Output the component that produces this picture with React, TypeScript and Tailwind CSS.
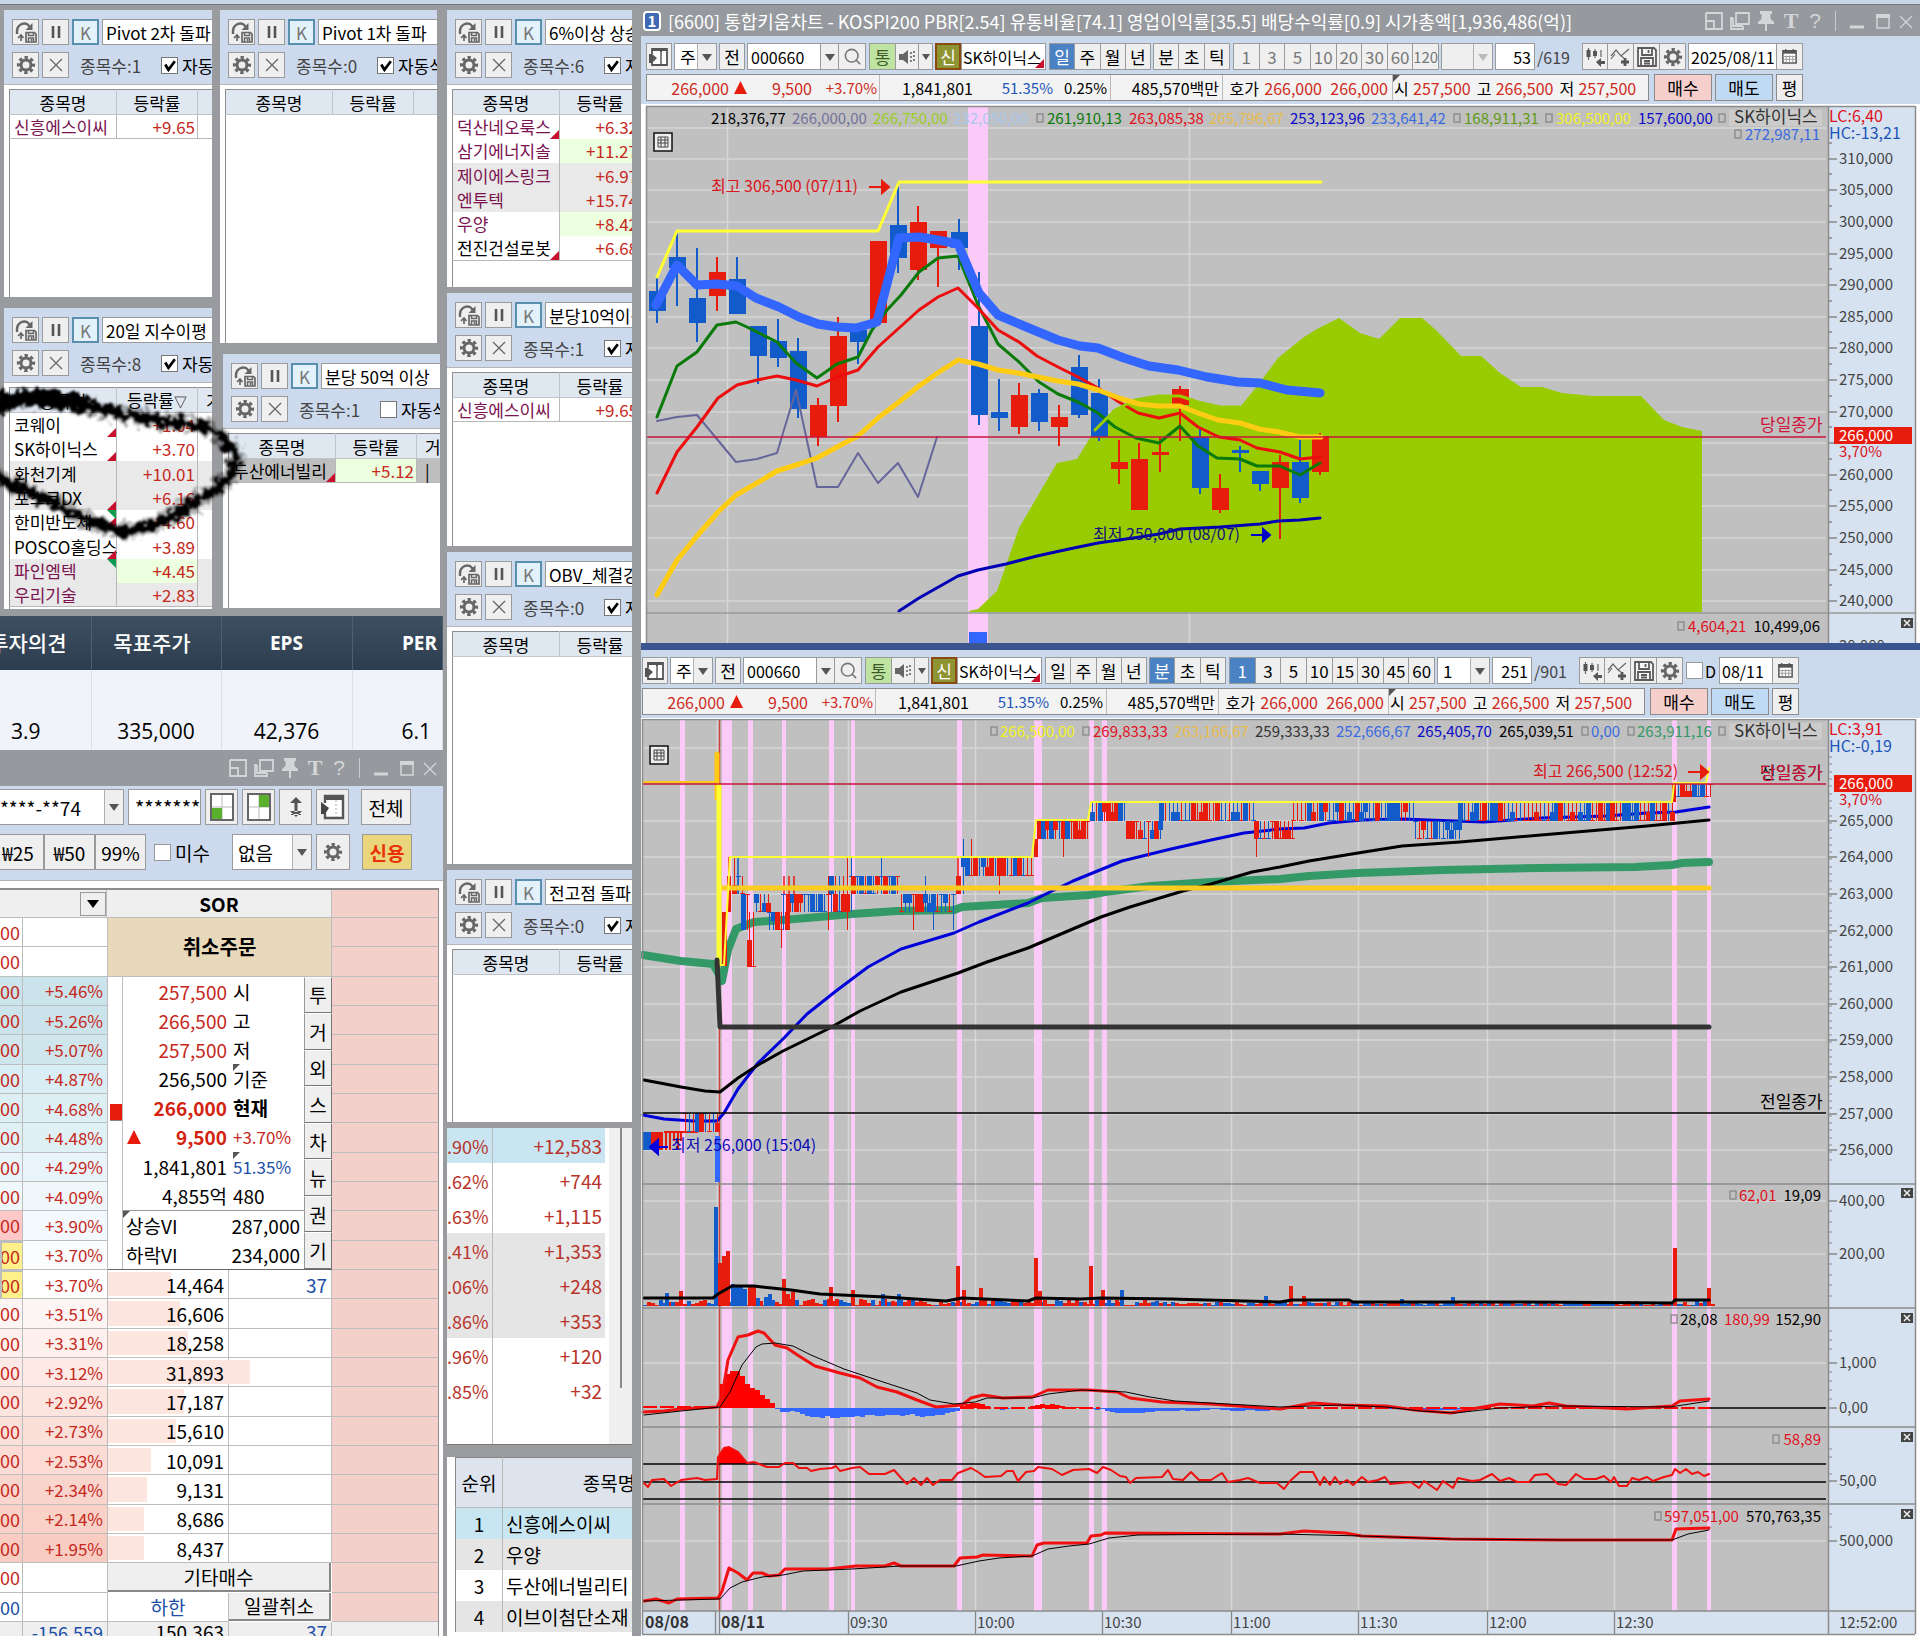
import React from "react";
import { Search } from "lucide-react";

type Pt = [number, number];

const RED = "#e81c0c";
const BLUE = "#115bcb";
const BTN = "border border-[#9a9a9a] bg-[#efefef] flex items-center justify-center overflow-hidden";

/* ---------- icons ---------- */

const Gear = () => (
  <svg viewBox="0 0 20 20" className="size-5 shrink-0" aria-hidden="true">
    <circle cx="10" cy="10" r="7.4" fill="none" stroke="#666" strokeWidth="3.400" strokeDasharray="3.200 2.61" strokeDashoffset="1.6" />
    <circle cx="10" cy="10" r="5" fill="none" stroke="#666" strokeWidth="3" />
  </svg>
);

const Cross = () => (
  <svg viewBox="0 0 16 16" className="size-4 shrink-0" aria-hidden="true">
    <path d="M2 2L14 14M14 2L2 14" stroke="#666" strokeWidth="1.3" />
  </svg>
);

const ReloadSave = () => (
  <svg viewBox="0 0 24 24" className="size-6 shrink-0" aria-hidden="true">
    <path d="M3 14V11C3 6 8 2 13 4L17 8" fill="none" stroke="#666" strokeWidth="2.400" />
    <path d="M18.500 3V10H11.500Z" fill="#666" />
    <path d="M7 15.500V21M4 18L7 15L9.500 18" stroke="#666" strokeWidth="1.700" fill="none" />
    <path d="M12 12.500H20.500L22 14V22H12Z" fill="#efefef" stroke="#666" strokeWidth="1.700" />
    <path d="M14.500 12V15.500H19.500V12M14.500 22V18H19.500V22M17.500 19V21" fill="none" stroke="#666" strokeWidth="1.500" />
  </svg>
);

const Pause = () => (
  <svg viewBox="0 0 16 16" className="size-4 shrink-0" aria-hidden="true">
    <path d="M5 2V14M11 2V14" stroke="#555" strokeWidth="2.600" />
  </svg>
);

const PanelIcon = () => (
  <svg viewBox="0 0 22 22" className="size-[22px] shrink-0" aria-hidden="true">
    <path d="M4 8V3H19V19H4V16" fill="#fff" stroke="#555" strokeWidth="1.8" />
    <path d="M4 4H19M13 4V19" stroke="#555" strokeWidth="2" fill="none" />
    <path d="M13 6V18" stroke="#fff" strokeWidth="0.600" />
    <path d="M1 8H4L9 12L4 17H1Z" fill="#555" />
  </svg>
);

const Speaker = () => (
  <svg viewBox="0 0 20 20" className="size-5 shrink-0" aria-hidden="true">
    <path d="M2 7H6L11 3V17L6 13H2Z" fill="#666" />
    <path d="M14 5V15M17 4V16" stroke="#666" strokeWidth="1.6" strokeDasharray="2 2" />
  </svg>
);

const CandleArrow = () => (
  <svg viewBox="0 0 22 22" className="size-[22px] shrink-0" aria-hidden="true">
    <path d="M4.500 2V14M11 3V12M17 4V11" stroke="#666" strokeWidth="1.200" />
    <path d="M2.500 4H6.500V11H2.500ZM9 5H13V10H9Z" fill="#555" />
    <path d="M12 16L17 12V15H21V18H17V21Z" fill="#555" />
  </svg>
);

const ZigPlus = () => (
  <svg viewBox="0 0 22 22" className="size-[22px] shrink-0" aria-hidden="true">
    <path d="M1 10L6 4L11 10L19 3M1 13L5 8M11 10L14 12" fill="none" stroke="#666" strokeWidth="1.200" />
    <path d="M15 12V20M11 16H19" stroke="#555" strokeWidth="2.800" />
  </svg>
);

const Floppy = () => (
  <svg viewBox="0 0 22 22" className="size-[22px] shrink-0" aria-hidden="true" fill="none" stroke="#5c5c5c" strokeWidth="1.800">
    <path d="M2 2H18L20 4V20H2Z" fill="#f4f4f4" />
    <path d="M6 2V9H16V2M12.500 4V7" />
    <path d="M5 20V12H17V20M8 15H14M8 17.500H14" />
  </svg>
);

const CalendarIcon = () => (
  <svg viewBox="0 0 18 18" className="size-[17px] shrink-0" aria-hidden="true" fill="none" stroke="#555">
    <path d="M2 3H16V16H2Z" fill="#fff" strokeWidth="1.600" />
    <path d="M2 4.500H16" strokeWidth="3" />
    <path d="M5 1V5M13 1V5" strokeWidth="1.500" />
    <path d="M5.500 8V15M9 8V15M12.500 8V15M3 9H15M3 12H15" stroke="#999" />
  </svg>
);

const Caret = ({ light = false }: { light?: boolean }) => (
  <svg viewBox="0 0 10 8" className="h-2 w-[10px] shrink-0" aria-hidden="true">
    <path d="M0 1H10L5 8Z" fill={light ? "#bbb" : "#555"} />
  </svg>
);

function TitleButtons() {
  const b = "flex h-5 w-[26px] items-center justify-center";
  return (
    <div className="flex shrink-0 items-center text-[#d3d5d7]">
      <button className={b} aria-label="크기">
        <svg viewBox="0 0 18 18" className="size-[18px]" fill="none" stroke="currentColor" strokeWidth="1.800">
          <path d="M1 1H17V17H9M1 1V8M1 9H9V17H1Z" />
        </svg>
      </button>
      <button className={b} aria-label="복사">
        <svg viewBox="0 0 20 18" className="h-[18px] w-5" fill="none" stroke="currentColor" strokeWidth="1.800">
          <path d="M6 1H19V12H6ZM3 6H1V17H13V14M3 6V14H13" />
        </svg>
      </button>
      <button className={b} aria-label="고정">
        <svg viewBox="0 0 16 20" className="h-5 w-4" fill="currentColor">
          <path d="M2 0H14V3H12.500V8L16 11V13H0V11L3.500 8V3H2ZM7 13H9V20H7Z" />
        </svg>
      </button>
      <button className="w-6 font-['Liberation_Serif',serif] text-[22px] leading-5 font-bold" aria-label="글꼴">T</button>
      <button className="w-6 font-['Liberation_Sans',sans-serif] text-[21px] leading-5" aria-label="도움말">?</button>
      <span className="mx-2 h-5 w-px bg-[#c8cacc]" />
      <button className={b} aria-label="최소화">
        <svg viewBox="0 0 14 18" className="h-[18px] w-[14px]"><path d="M0 15H14" stroke="currentColor" strokeWidth="3" /></svg>
      </button>
      <button className={b} aria-label="최대화">
        <svg viewBox="0 0 14 18" className="h-[18px] w-[14px]" fill="none" stroke="currentColor"><path d="M1 5V16H13V5" strokeWidth="1.500" /><path d="M0 4H14" strokeWidth="4" /></svg>
      </button>
      <button className="flex h-5 w-5 items-center justify-center" aria-label="닫기">
        <svg viewBox="0 0 14 18" className="h-[18px] w-[14px]"><path d="M1 4L13 16M13 4L1 16" stroke="currentColor" strokeWidth="1.300" /></svg>
      </button>
    </div>
  );
}

/* ---------- condition search windows ---------- */

type Row = { name: string; rate: string; extra?: string; dark?: boolean; nameBg?: string; rateBg?: string; mark?: "r" | "g" | "rg" };

type CondProps = { title: string; count: number; rows?: Row[]; checked?: boolean; sorted?: boolean; third?: string; className: string };

function ConditionWindow({ title, count, rows = [], checked = true, sorted = false, third = "", className }: CondProps) {
  const b = BTN + " h-[26px] w-[27px] shrink-0";
  return (
    <section className={"relative shrink-0 overflow-hidden bg-white " + className}>
      <div className="flex h-[75px] w-[320px] flex-col gap-[7px] border-b border-[#b5b5b5] bg-[#cddaed] pt-[9px] pl-2">
        <div className="flex gap-[3px]">
          <button className={b} aria-label="다시 조회"><ReloadSave /></button>
          <button className={b} aria-label="일시정지"><Pause /></button>
          <button className="flex h-[26px] w-[27px] shrink-0 items-center justify-center border-2 border-[#5b8fae] bg-[#e3f1fa] leading-none text-[#777]">K</button>
          <input aria-label="조건식" defaultValue={title} className="h-[26px] w-[200px] border border-[#9a9a9a] bg-white pl-[3px] leading-none text-black" />
        </div>
        <div className="flex items-center gap-[3px]">
          <button className={b} aria-label="설정"><Gear /></button>
          <button className={b} aria-label="삭제"><Cross /></button>
          <span className="ml-2 w-[78px] leading-none text-[#444]">종목수:{count}</span>
          <label className="flex items-center gap-1 leading-none whitespace-nowrap">
            <span className="relative flex">
              <input type="checkbox" defaultChecked={checked} className="peer size-[17px] appearance-none border border-[#777] bg-white" />
              <svg viewBox="0 0 16 16" className="pointer-events-none absolute inset-0 hidden size-[17px] peer-checked:block"><path d="M4 7L7 12L13 4" fill="none" stroke="#000" strokeWidth="2.600" /></svg>
            </span>
            자동삭제
          </label>
        </div>
      </div>
      <table className="mt-1 ml-[5px] h-full w-[290px] table-fixed border-collapse border-t border-l border-[#8e8e8e] leading-none">
        <colgroup><col className="w-[107px]" /><col className="w-[81px]" /><col /></colgroup>
        <thead>
          <tr className="h-[25px] bg-[#dfe7f1]">
            <th className="border-r border-b border-[#c0c4ca] font-normal">종목명</th>
            <th className="border-r border-b border-[#c0c4ca] font-normal whitespace-nowrap">등락률{sorted && <svg viewBox="0 0 14 14" className="inline size-[13px]"><path d="M1 1H13L7 13Z" fill="none" stroke="#555" /></svg>}</th>
            <th className="border-b border-[#c0c4ca] pl-2 text-left font-normal">{third}</th>
          </tr>
        </thead>
        <tbody>
          {rows.map((r, i) => (
            <tr key={i} className={"h-6 nth-[3n]:h-[25px] " + (i === rows.length - 1 ? "border-b border-[#b8b8b8]" : "")}>
              <td className={"relative border-r border-[#b8b8b8] pl-1 whitespace-nowrap " + (r.dark ? "text-black " : "text-[#7a1350] ") + (r.nameBg ?? "")}>
                {r.name}
                {r.mark && (
                  <svg viewBox="0 0 9 16" className={"absolute right-0 h-4 w-[9px] " + (r.mark === "r" ? "bottom-0" : "top-0")}>
                    {r.mark !== "g" && <path d="M9 7V16H0Z" fill="#c8102e" />}
                    {r.mark !== "r" && <path d="M0 0H9V9Z" fill="#109c50" />}
                  </svg>
                )}
              </td>
              <td className={"border-r border-[#b8b8b8] pr-[2px] text-right text-[#c5281c] " + (r.rateBg ?? "")}>{r.rate}</td>
              <td className={(r.nameBg ?? "") + " pl-2"}>{r.extra}</td>
            </tr>
          ))}
          <tr><td colSpan={3} /></tr>
        </tbody>
      </table>
    </section>
  );
}

const G = "bg-[#e9e9e9]";
const L = "bg-[#ecffdf]";

const rowsIndex: Row[] = [
  { name: "코웨이", rate: "+1.04", dark: true, mark: "r" },
  { name: "SK하이닉스", rate: "+3.70", dark: true, mark: "r" },
  { name: "화천기계", rate: "+10.01", dark: true, nameBg: G, rateBg: G },
  { name: "포스코DX", rate: "+6.16", dark: true, nameBg: G, rateBg: G, mark: "r" },
  { name: "한미반도체", rate: "+4.60", dark: true, mark: "rg" },
  { name: "POSCO홀딩스", rate: "+3.89", dark: true, mark: "r" },
  { name: "파인엠텍", rate: "+4.45", nameBg: G, rateBg: L, mark: "g" },
  { name: "우리기술", rate: "+2.83", nameBg: G, rateBg: G },
];

const rowsSix: Row[] = [
  { name: "덕산네오룩스", rate: "+6.32", mark: "r" },
  { name: "삼기에너지솔", rate: "+11.27", rateBg: L },
  { name: "제이에스링크", rate: "+6.97", nameBg: G, rateBg: G },
  { name: "엔투텍", rate: "+15.74", nameBg: G, rateBg: G },
  { name: "우양", rate: "+8.42", rateBg: L },
  { name: "전진건설로봇", rate: "+6.68", dark: true, mark: "r" },
];

/* Hand-drawn marker ring around the highlighted rows */
const MarkerRing = () => (
  <svg viewBox="0 0 260 180" className="pointer-events-none absolute top-[370px] left-0 h-[180px] w-[260px]" aria-hidden="true">
    <defs>
      <filter id="rough" x="-10%" y="-10%" width="120%" height="120%">
        <feTurbulence type="fractalNoise" baseFrequency="0.14" numOctaves="2" seed="4" result="n" />
        <feDisplacementMap in="SourceGraphic" in2="n" scale="18" xChannelSelector="R" yChannelSelector="G" result="d" />
        <feGaussianBlur in="d" stdDeviation="0.9" />
      </filter>
    </defs>
    <g filter="url(#rough)" fill="none" stroke="#000" strokeLinecap="round" strokeLinejoin="round">
      <path d="M-8 34L8 26L41 24L82 31L122 39L163 46L204 51L222 62L235 78L233 97L216 114L184 134L155 150L122 157L90 147L53 127L12 110L-8 98" strokeWidth="17" opacity="0.3" />
      <path d="M-8 34L8 24L41 22L82 28" strokeWidth="17" />
      <path d="M82 30L122 39L163 46L204 51L222 62L235 78L233 97L216 114L184 134L155 150L122 157L90 147L53 127L12 110L-8 98" strokeWidth="9" />
    </g>
  </svg>
);

/* ---------- order window ---------- */

function Combo({ value, label, className, arrow = "w-[19px]", light = false }: { value: string; label: string; className: string; arrow?: string; light?: boolean }) {
  return (
    <div className={"relative shrink-0 border border-[#9a9a9a] " + (light ? "bg-[#efefef] " : "bg-white ") + className}>
      <select aria-label={label} className="absolute inset-0 size-full appearance-none bg-transparent pl-[5px] leading-none outline-none">
        <option>{value}</option>
      </select>
      <span className={"pointer-events-none absolute inset-y-0 right-0 flex items-center justify-center border-l border-[#b0b0b0] bg-[#efefef] " + arrow}><Caret light={light} /></span>
    </div>
  );
}

const asks: [string, string, string][] = [
  ["+5.46%", "bg-[#cbe3ea]", "bg-[#cbe3ea]"], ["+5.26%", "bg-[#cbe3ea]", "bg-[#cbe3ea]"], ["+5.07%", "bg-[#cfe6ed]", "bg-[#cfe6ed]"],
  ["+4.87%", "bg-[#d9edf4]", "bg-[#d9edf4]"], ["+4.68%", "bg-[#dceff5]", "bg-[#dceff5]"], ["+4.48%", "bg-[#e0f1f6]", "bg-[#e0f1f6]"],
  ["+4.29%", "bg-[#e8f4f9]", "bg-[#e8f4f9]"], ["+4.09%", "bg-[#eff7fb]", "bg-[#eff7fb]"], ["+3.90%", "bg-[#f3f9fd]", "bg-[#ffc8c8]"],
  ["+3.70%", "bg-[#fafcfe]", "bg-[#fff08a] border-2 border-[#a03018]"],
];
const bids: [string, string, string, string, number, string][] = [
  ["+3.70%", "bg-white", "bg-[#fff08a] border-2 border-[#a03018]", "14,464", 63, "37"],
  ["+3.51%", "bg-[#fdf5f3]", "bg-[#fdf5f3]", "16,606", 72, ""],
  ["+3.31%", "bg-[#fdf0ed]", "bg-[#fdf0ed]", "18,258", 80, ""],
  ["+3.12%", "bg-[#fdeae6]", "bg-[#fdeae6]", "31,893", 142, ""],
  ["+2.92%", "bg-[#fce4df]", "bg-[#fce4df]", "17,187", 76, ""],
  ["+2.73%", "bg-[#fbe0da]", "bg-[#fbe0da]", "15,610", 68, ""],
  ["+2.53%", "bg-[#fbdbd4]", "bg-[#fbdbd4]", "10,091", 43, ""],
  ["+2.34%", "bg-[#fad5cd]", "bg-[#fad5cd]", "9,131", 39, ""],
  ["+2.14%", "bg-[#fad1c7]", "bg-[#fad1c7]", "8,686", 36, ""],
  ["+1.95%", "bg-[#f9ccc2]", "bg-[#f9ccc2]", "8,437", 36, ""],
];

const CELL = "flex items-center border-r border-b border-[#bdbdbd] overflow-hidden";

const Price = ({ cls = "", blue = false }: { cls?: string; blue?: boolean }) => (
  <div className={CELL + " justify-end pr-[2px] text-[18px] " + (blue ? "text-[#1c4fa8] " : "text-[#c5281c] ") + cls}>00</div>
);

const Corner = () => <svg viewBox="0 0 7 7" className="absolute top-0 left-0 size-[7px]"><path d="M0 0H7L0 7Z" fill="#555" /></svg>;

function InfoRow({ v, l, vc = "", lc = "", corner = false, up = false }: { v: string; l: string; vc?: string; lc?: string; corner?: boolean; up?: boolean }) {
  return (
    <div className="flex min-h-0 flex-1 items-center text-[19px]">
      {up && <svg viewBox="0 0 14 14" className="ml-1 size-[14px]"><path d="M7 0L14 14H0Z" fill={RED} /></svg>}
      <span className={(up ? "w-[86px] " : "w-[104px] ") + "text-right " + vc}>{v}</span>
      <span className={"relative ml-[6px] flex h-full items-center whitespace-nowrap " + lc}>{corner && <Corner />}{l}</span>
    </div>
  );
}

function OrderWindow() {
  const b = BTN + " h-9 leading-none";
  return (
    <section className="flex min-h-0 flex-1 flex-col bg-white text-[19px]">
      <header className="flex h-9 shrink-0 items-center justify-end bg-[#96999e] pr-[3px]"><TitleButtons /></header>
      <div className="flex h-[95px] shrink-0 flex-col gap-[9px] border-b border-[#b0b0b0] bg-[#cddaed] pt-[3px]">
        <div className="flex gap-1">
          <Combo value="****-**74" label="계좌" className="-ml-[6px] h-9 w-[130px]" />
          <input type="text" aria-label="비밀번호" defaultValue="*******" className="h-9 w-[73px] border border-[#9a9a9a] bg-white pl-[6px] text-[20px] leading-none" />
          <button className={b + " w-[33px]"} aria-label="좌하단 배치"><svg viewBox="0 0 24 28" className="h-7 w-6"><rect x="1" y="1" width="22" height="26" fill="#fff" stroke="#666" strokeWidth="2" /><path d="M12 2V26M2 14H22" stroke="#bbb" /><rect x="2" y="15" width="10" height="11" fill="#59b02c" /></svg></button>
          <button className={b + " w-[33px]"} aria-label="우상단 배치"><svg viewBox="0 0 24 28" className="h-7 w-6"><rect x="1" y="1" width="22" height="26" fill="#fff" stroke="#666" strokeWidth="2" /><path d="M12 2V26M2 14H22" stroke="#bbb" /><rect x="12" y="2" width="10" height="12" fill="#59b02c" /></svg></button>
          <button className={b + " w-[33px]"} aria-label="높이"><svg viewBox="0 0 12 20" className="h-5 w-3"><path d="M6 0L12 6H0ZM6 20L12 14H0ZM4.500 5H7.500V15H4.500ZM1 17H11V18H1Z" fill="#555" /></svg></button>
          <button className={b + " w-[33px]"} aria-label="패널"><svg viewBox="0 0 26 28" className="h-7 w-[26px]"><path d="M5 10V3H23V25H5V20" fill="#fff" stroke="#555" strokeWidth="2.400" /><path d="M5 5H23" stroke="#555" strokeWidth="4" /><path d="M16 7V24" stroke="#aaa" strokeDasharray="2 2" /><path d="M1 9L9 15L5 21H1Z" fill="#444" /></svg></button>
          <button className={b + " ml-2 w-[50px]"}>전체</button>
        </div>
        <div className="flex items-center">
          <button className={b + " -ml-2 w-[52px]"}>₩25</button>
          <button className={b + " w-[51px]"}>₩50</button>
          <button className={b + " w-[51px]"}>99%</button>
          <label className="ml-2 flex w-[78px] items-center gap-1 leading-none"><input type="checkbox" className="size-[17px] appearance-none border border-[#999] bg-white" />미수</label>
          <Combo value="없음" label="구분" className="h-9 w-20" />
          <button className={b + " ml-1 w-[34px]"} aria-label="설정"><Gear /></button>
          <button className="ml-3 h-9 w-[50px] border border-[#9a9a9a] bg-[#e9d67c] leading-none font-bold text-[#e8320a]">신용</button>
        </div>
      </div>
      <div className="mr-1 mt-[7px] flex min-h-0 flex-1 flex-col border-t-2 border-r border-[#8c8c8c] leading-none">
        <div className="grid h-7 shrink-0 grid-cols-[107px_225px_1fr]">
          <div className={CELL + " justify-end bg-[#efefef]"}><button className="flex h-6 w-[26px] items-center justify-center border border-[#999] bg-[#efefef]" aria-label="목록"><svg viewBox="0 0 12 8" className="h-2 w-3"><path d="M0 0H12L6 8Z" /></svg></button></div>
          <div className={CELL + " justify-center bg-[#efefef] font-bold"}>SOR</div>
          <div className="border-b border-[#bdbdbd] bg-[#f4d0cb]" />
        </div>
        <div className="grid h-[704px] shrink-0 auto-rows-fr grid-cols-[23px_85px_121px_103px_1fr]">
          <Price /><div className={CELL} />
          <button className="col-span-2 row-span-2 border-r border-b border-[#bdbdbd] bg-[#e8d9bb] text-[20px] font-bold">취소주문</button>
          <div className="border-b border-[#bdbdbd] bg-[#f4d0cb]" />
          <Price /><div className={CELL} /><div className="border-b border-[#bdbdbd] bg-[#f4d0cb]" />
          {asks.map(([p, bg, pbg], i) => (
            <React.Fragment key={i}>
              <Price cls={pbg} />
              <div className={CELL + " justify-end pr-1 text-[17px] text-[#c5281c] " + bg}>{p}</div>
              {i === 0 && (
                <div className="col-span-2 row-[span_10/span_10] flex border-b border-[#666]">
                  <div className="flex w-[15px] items-end border-r border-[#bdbdbd] pb-[148px]"><span className="ml-[2px] h-[17px] w-3 border-b border-[#888] bg-[#e81c0c]" /></div>
                  <div className="flex w-[181px] flex-col">
                    <InfoRow v="257,500" l="시" vc="text-[#c5281c]" />
                    <InfoRow v="266,500" l="고" vc="text-[#c5281c]" />
                    <InfoRow v="257,500" l="저" vc="text-[#c5281c]" />
                    <InfoRow v="256,500" l="기준" corner />
                    <InfoRow v="266,000" l="현재" vc="font-bold text-[#d3220f]" lc="font-bold" />
                    <InfoRow v="9,500" l="+3.70%" vc="font-bold text-[#d3220f]" lc="text-[17px] text-[#c5281c]" up />
                    <InfoRow v="1,841,801" l="51.35%" lc="text-[17px] text-[#1c4fa8]" corner />
                    <InfoRow v="4,855억" l="480" />
                    <div className="relative flex flex-2 flex-col border-t border-[#999]">
                      <Corner />
                      <div className="flex flex-1 items-center justify-between pr-1 pl-[3px]"><span>상승VI</span><span>287,000</span></div>
                      <div className="flex flex-1 items-center justify-between pr-1 pl-[3px]"><span>하락VI</span><span>234,000</span></div>
                    </div>
                  </div>
                  <div className="flex flex-1 flex-col">
                    {["투", "거", "외", "스", "차", "뉴", "권", "기"].map((t) => (
                      <button key={t} className="flex-1 border border-t-white border-r-[#777] border-b-[#777] border-l-[#999] bg-[#efefef] text-[19px]">{t}</button>
                    ))}
                  </div>
                </div>
              )}
              <div className="border-b border-[#bdbdbd] bg-[#f4d0cb]" />
            </React.Fragment>
          ))}
          {bids.map(([p, bg, pbg, qty, w, n], i) => (
            <React.Fragment key={i}>
              <Price cls={pbg} />
              <div className={CELL + " justify-end pr-1 text-[17px] text-[#c5281c] " + bg}>{p}</div>
              <div className="relative flex items-center justify-end border-r border-b border-[#bdbdbd] pr-1">
                <span className="absolute inset-y-[2px] left-0 bg-[#fde6e0]" style={{ width: w }} />
                <span className="relative">{qty}</span>
              </div>
              <div className={CELL + " justify-end pr-1 text-[#1c4fa8]"}>{n}</div>
              <div className="border-b border-[#bdbdbd] bg-[#f4d0cb]" />
            </React.Fragment>
          ))}
          <Price /><div className={CELL} />
          <button className="col-span-2 mr-px mb-px border-r-2 border-b-2 border-[#888] bg-[#efefef]">기타매수</button>
          <div className="border-b border-[#bdbdbd] bg-[#f4d0cb]" />
          <Price blue /><div className={CELL} />
          <div className={CELL + " justify-center text-[#1c4fa8]"}>하한</div>
          <button className="mr-px mb-px border-r-2 border-b-2 border-[#888] bg-[#efefef]">일괄취소</button>
          <div className="border-b border-[#bdbdbd] bg-[#f4d0cb]" />
        </div>
        <div className="grid h-[29px] grid-cols-[23px_85px_121px_103px_1fr] bg-[#efefef]">
          <div className={CELL} />
          <div className={CELL + " justify-end pr-1 text-[18px] text-[#1c4fa8]"}>-156,559</div>
          <div className={CELL + " justify-end pr-1"}>150,363</div>
          <div className={CELL + " justify-end pr-1 text-[#1c4fa8]"}>37</div>
          <div />
        </div>
      </div>
    </section>
  );
}

/* ---------- middle column lists ---------- */

const flows: [string, string, string][] = [
  [".90%", "+12,583", "bg-[#c8e5f1]"], [".62%", "+744", ""], [".63%", "+1,115", ""], [".41%", "+1,353", "bg-[#e5e5e5]"],
  [".06%", "+248", "bg-[#e5e5e5]"], [".86%", "+353", "bg-[#e5e5e5]"], [".96%", "+120", ""], [".85%", "+32", ""],
];

function FlowList() {
  return (
    <section className="flex h-[317px] shrink-0 overflow-hidden border-b border-[#777] bg-white text-[18px] leading-none text-[#b8342a]">
      <table className="h-[317px] w-[158px] shrink-0 table-fixed border-collapse">
        <colgroup><col className="w-[45px]" /><col /></colgroup>
        <tbody>
          {flows.map(([a, b, bg], i) => (
            <tr key={i} className={"h-[35px] " + bg}>
              <td className="border-r border-[#bbb] pr-[3px] text-right"><div className="flex justify-end">{a}</div></td>
              <td className="pr-[3px] text-right text-[19px]">{b}</td>
            </tr>
          ))}
          <tr><td className="border-r border-[#bbb]" /><td /></tr>
        </tbody>
      </table>
      <div className="ml-1 flex flex-1 justify-center bg-[#efefef]"><span className="h-[260px] w-[2px] bg-[#8a8a8a]" /></div>
    </section>
  );
}

function RankList() {
  const rows: [string, string, string][] = [
    ["1", "신흥에스이씨", "bg-[#c8e6f2]"], ["2", "우양", "bg-[#e5e5e5]"], ["3", "두산에너빌리티", "bg-white"], ["4", "이브이첨단소재", "bg-[#e5e5e5]"],
  ];
  return (
    <section className="min-h-0 flex-1 overflow-hidden bg-white pl-2 text-[19px] leading-none">
      <table className="w-[260px] table-fixed border-collapse border-t border-l border-[#888]">
        <colgroup><col className="w-[47px]" /><col /></colgroup>
        <thead><tr className="h-[50px] bg-[#dde4ee]"><th className="border-r border-b border-[#b8b8b8] font-normal whitespace-nowrap">순위</th><th className="border-b border-[#b8b8b8] font-normal">종목명</th></tr></thead>
        <tbody>{rows.map(([n, t, bg]) => <tr key={n} className={"h-[31px] " + bg}><td className="border-r border-[#b8b8b8] text-center">{n}</td><td className="pl-[3px] whitespace-nowrap">{t}</td></tr>)}</tbody>
      </table>
    </section>
  );
}

/* ---------- chart toolbar ---------- */

function Group({ items, active, className, dim = false }: { items: string[]; active?: string; className: string; dim?: boolean }) {
  return (
    <div className={"flex h-[27px] shrink-0 border-t border-l border-[#9a9a9a] " + className}>
      {items.map((t) => (
        <button key={t} className={"flex min-w-0 flex-1 items-center justify-center border-r border-b border-[#9a9a9a] leading-none " + (t.length > 2 ? "text-[15px] " : "") + (t === active ? "bg-[#4a82c4] text-white" : dim ? "bg-[#efefef] text-[#777]" : "bg-[#efefef] text-black")}>{t}</button>
      ))}
    </div>
  );
}

function ChartToolbar({ minute = false }: { minute?: boolean }) {
  const b = BTN + " h-[27px] shrink-0";
  const red = "text-[#cf2a1c]";
  return (
    <div className={"flex h-[69px] shrink-0 flex-col gap-1 overflow-hidden border-b border-white bg-[#cbd9ec] pt-[7px] " + (minute ? "pl-px" : "pl-[5px]")}>
      <div className="flex items-center gap-[2px]">
        <button className={b + " w-[26px]"} aria-label="패널"><PanelIcon /></button>
        <Combo value="주" label="시장" className="h-[27px] w-[43px]" />
        <button className={b + " w-[26px]"}>전</button>
        <div className="mr-px flex">
          <input aria-label="종목코드" defaultValue="000660" className="h-[27px] w-[74px] border border-[#9a9a9a] bg-white pl-[3px] text-[16px] leading-none" />
          <button className={b + " w-[18px] border-l-0"} aria-label="최근 종목"><Caret /></button>
          <button className={b + " w-[27px] border-l-0"} aria-label="검색"><Search size={19} color="#777" strokeWidth={2} /></button>
        </div>
        <div className="flex">
          <button className="h-[27px] w-[27px] border border-[#9a9a9a] bg-[#bfe3a0] leading-none text-[#3c5a2a]">통</button>
          <button className={b + " w-[23px] border-l-0"} aria-label="소리"><Speaker /></button>
          <button className={b + " w-[14px] border-l-0"} aria-label="소리 설정"><svg viewBox="0 0 8 6" className="h-[6px] w-2"><path d="M0 0H8L4 6Z" fill="#555" /></svg></button>
        </div>
        <div className="relative mr-px flex">
          <span className="flex h-[27px] w-[26px] items-center justify-center border-2 border-[#8a4a10] bg-[#8f9432] leading-none text-white">신</span>
          <span className="flex h-[27px] w-[85px] items-center border border-[#9a9a9a] bg-white pl-px text-[16px] leading-none whitespace-nowrap">SK하이닉스</span>
          <svg viewBox="0 0 9 9" className="absolute right-[2px] bottom-[2px] size-[9px]"><path d="M9 0V9H0Z" fill="#c8102e" /></svg>
        </div>
        <Group className="w-[102px]" items={["일", "주", "월", "년"]} active={minute ? undefined : "일"} />
        <Group className="mr-px w-[77px]" items={["분", "초", "틱"]} active={minute ? "분" : undefined} />
        {minute ? (
          <Group className="w-[206px]" items={["1", "3", "5", "10", "15", "30", "45", "60"]} active="1" />
        ) : (
          <Group className="w-[206px]" items={["1", "3", "5", "10", "20", "30", "60", "120"]} dim />
        )}
        {minute ? <Combo value="1" label="간격" className="h-[27px] w-[53px] pl-2" /> : <Combo value="" label="간격" light className="h-[27px] w-[52px]" />}
        <input aria-label="봉 개수" defaultValue={minute ? "251" : "53"} className="h-[27px] w-10 border border-[#9a9a9a] bg-white pr-[3px] text-right text-[16px] leading-none" />
        <span className="w-[43px] text-[16px] leading-none text-[#444]">{minute ? "/901" : "/619"}</span>
        <div className="flex">
          <button className={b + " w-[26px]"} aria-label="봉 이동"><CandleArrow /></button>
          <button className={b + " w-[26px] border-l-0"} aria-label="지표 추가"><ZigPlus /></button>
          <button className={b + " w-[26px] border-l-0"} aria-label="저장"><Floppy /></button>
          <button className={b + " w-[26px] border-l-0"} aria-label="설정"><Gear /></button>
        </div>
        {minute && <label className="mx-px flex items-center gap-[2px] text-[16px] leading-none"><input type="checkbox" className="size-[17px] appearance-none border border-[#999] bg-white" />D</label>}
        <div className="flex">
          <input aria-label="날짜" defaultValue={minute ? "08/11" : "2025/08/11"} className={"h-[27px] border border-[#9a9a9a] bg-white pl-[2px] text-[16px] leading-none " + (minute ? "w-[54px]" : "w-[89px]")} />
          <button className={b + " w-[26px] border-l-0"} aria-label="달력"><CalendarIcon /></button>
        </div>
      </div>
      <div className="flex text-[16px] leading-none whitespace-nowrap">
        <div className="flex h-[27px] w-[1003px] shrink-0 items-center border border-[#8c8c8c] bg-[#f3f3f3]">
          <span className={"w-[82px] text-right " + red}>266,000</span>
          <svg viewBox="0 0 14 14" className="mx-[5px] size-[13px]"><path d="M7 0L14 14H0Z" fill={RED} /></svg>
          <span className={"w-[60px] text-right " + red}>9,500</span>
          <span className={"flex h-full w-[68px] items-center justify-end border-r border-[#bbb] pr-[2px] text-[15px] " + red}>+3.70%</span>
          <span className="w-[93px] text-right">1,841,801</span>
          <span className="w-20 text-right text-[15px] text-[#1d55b8]">51.35%</span>
          <span className="flex h-full w-[58px] items-center justify-end border-r border-[#bbb] pr-[3px] text-[15px]">0.25%</span>
          <span className="flex h-full w-28 items-center justify-end border-r border-[#bbb] pr-[3px]">485,570백만</span>
          <span className="w-9 text-right">호가</span>
          <span className={"w-[63px] text-right " + red}>266,000</span>
          <span className={"flex h-full w-[71px] items-center justify-end border-r border-[#bbb] pr-1 " + red}>266,000</span>
          <span className="relative flex h-full items-center pl-px"><Corner />시</span>
          <span className={"w-[62px] text-right " + red}>257,500</span>
          <span className="ml-[6px]">고</span>
          <span className={"w-[62px] text-right " + red}>266,500</span>
          <span className="ml-[6px]">저</span>
          <span className={"w-[62px] text-right " + red}>257,500</span>
        </div>
        <button className="ml-[5px] h-[27px] w-[58px] shrink-0 border border-[#8c8c8c] bg-[#f4cfcb] text-[17px]">매수</button>
        <button className="ml-[3px] h-[27px] w-[58px] shrink-0 border border-[#8c8c8c] bg-[#c0daf3] text-[17px]">매도</button>
        <button className="ml-[3px] h-[27px] w-[27px] shrink-0 border border-[#8c8c8c] bg-[#efefef] text-[17px]">평</button>
      </div>
    </div>
  );
}

/* ---------- charts ---------- */

const T = ({ x, y, c = "#000", s = 15, end = false, bold = false, children }: { x: number; y: number; c?: string; s?: number; end?: boolean; bold?: boolean; children: React.ReactNode }) => (
  <text x={x} y={y + 6} fill={c} fontSize={s} textAnchor={end ? "end" : "start"} fontWeight={bold ? 700 : 400}>{children}</text>
);

const str = (p: Pt[]) => p.map(([a, b]) => a + "," + b).join(" ");
const Line = ({ p, c, w }: { p: Pt[]; c: string; w: number }) => <polyline points={str(p)} fill="none" stroke={c} strokeWidth={w} strokeLinejoin="round" strokeLinecap="round" />;
const H = ({ y, x1, x2, c = "#d6d6d6", w = 1.5 }: { y: number; x1: number; x2: number; c?: string; w?: number }) => <line x1={x1} x2={x2} y1={y} y2={y} stroke={c} strokeWidth={w} />;
const Box = ({ x, y }: { x: number; y: number }) => <rect x={x} y={y - 4} width="6" height="8" fill="none" stroke="#888" strokeWidth="1.300" />;
const CloseBox = ({ y }: { y: number }) => (
  <g><rect x="1901" y={y - 5} width="12" height="10" fill="#444" /><path d={`M1904 ${y - 3}L1910 ${y + 3}M1910 ${y - 3}L1904 ${y + 3}`} stroke="#eee" strokeWidth="1.500" /></g>
);
const TableIcon = ({ x, y }: { x: number; y: number }) => (
  <g><rect x={x} y={y} width="18" height="18" fill="#eee" stroke="#111" strokeWidth="1.500" /><path d={`M${x + 4} ${y + 4}h10v10h-10zM${x + 4} ${y + 7}h10M${x + 4} ${y + 10}h10M${x + 7} ${y + 4}v10M${x + 11} ${y + 4}v10`} fill="none" stroke="#444" /></g>
);

// kind, body top, body bottom, high, low
const daily: [0 | 1, number, number, number, number][] = [
  [0, 291, 311, 276, 323], [0, 257, 268, 232, 306], [0, 298, 323, 248, 342], [1, 272, 296, 257, 311], [0, 279, 314, 257, 314],
  [0, 326, 356, 326, 384], [0, 341, 358, 319, 367], [0, 351, 409, 338, 418], [1, 405, 437, 398, 446], [1, 336, 406, 317, 422],
  [0, 330, 342, 324, 364], [1, 241, 323, 241, 326], [0, 225, 258, 182, 273], [1, 222, 270, 206, 280], [1, 231, 248, 231, 287],
  [0, 232, 248, 219, 270], [0, 326, 415, 272, 425], [0, 412, 418, 379, 431], [1, 395, 427, 383, 434], [0, 393, 422, 389, 431],
  [1, 417, 427, 405, 446], [0, 367, 415, 355, 418], [0, 393, 437, 379, 441], [1, 462, 469, 440, 484], [1, 459, 510, 443, 510],
  [1, 452, 455, 437, 472], [1, 389, 405, 386, 441], [0, 437, 488, 429, 494], [1, 488, 510, 474, 513], [0, 450, 453, 446, 472],
  [0, 471, 484, 471, 491], [1, 462, 488, 455, 539], [0, 462, 498, 440, 503], [1, 436, 472, 433, 475],
];

const cloud: Pt[] = [[969, 611], [978, 609], [997, 591], [1019, 528], [1037, 497], [1057, 463], [1077, 459], [1095, 430], [1115, 410], [1135, 400], [1158, 396], [1180, 396], [1198, 402], [1220, 407], [1240, 407], [1258, 385], [1278, 358], [1304, 337], [1317, 329], [1339, 318], [1360, 333], [1379, 339], [1388, 330], [1400, 318], [1422, 318], [1436, 330], [1461, 356], [1481, 356], [1500, 373], [1521, 387], [1542, 387], [1562, 393], [1592, 396], [1641, 396], [1664, 420], [1682, 427], [1702, 431]];
const maBlue: Pt[] = [[656, 305], [677, 265], [697, 285], [717, 284], [737, 286], [756, 298], [779, 307], [799, 317], [818, 324], [838, 327], [856, 328], [877, 322], [899, 238], [919, 237], [938, 240], [958, 244], [979, 293], [998, 315], [1024, 326], [1058, 340], [1080, 346], [1098, 348], [1124, 358], [1149, 366], [1178, 370], [1207, 377], [1238, 382], [1260, 383], [1287, 390], [1320, 393]];
const maGold: Pt[] = [[657, 595], [677, 560], [697, 536], [718, 512], [736, 495], [757, 483], [777, 471], [796, 465], [817, 458], [837, 447], [858, 436], [878, 418], [899, 402], [919, 386], [939, 372], [958, 360], [978, 364], [998, 370], [1018, 373], [1038, 377], [1058, 381], [1078, 384], [1098, 390], [1119, 398], [1139, 404], [1159, 406], [1180, 406], [1198, 413], [1218, 420], [1240, 423], [1259, 429], [1279, 432], [1300, 437], [1321, 437]];
const maGreen: Pt[] = [[657, 417], [677, 366], [697, 352], [717, 325], [736, 322], [747, 327], [777, 342], [796, 363], [817, 378], [837, 364], [858, 357], [872, 330], [887, 310], [901, 295], [919, 272], [938, 258], [958, 256], [978, 305], [998, 344], [1019, 362], [1039, 382], [1058, 394], [1078, 402], [1098, 413], [1115, 427], [1136, 438], [1159, 443], [1180, 426], [1198, 446], [1217, 458], [1240, 459], [1257, 466], [1280, 466], [1300, 475], [1320, 463]];
const maRed: Pt[] = [[657, 493], [677, 452], [697, 427], [718, 398], [737, 385], [757, 380], [777, 376], [796, 380], [817, 386], [837, 377], [858, 370], [878, 347], [899, 328], [919, 310], [938, 297], [958, 288], [978, 308], [998, 330], [1019, 342], [1037, 356], [1058, 367], [1078, 377], [1098, 388], [1119, 402], [1138, 413], [1159, 418], [1180, 413], [1198, 427], [1219, 437], [1240, 440], [1257, 448], [1280, 452], [1300, 459], [1320, 457]];
const lag: Pt[] = [[657, 421], [677, 417], [697, 415], [736, 462], [757, 459], [777, 453], [796, 390], [817, 487], [838, 487], [858, 453], [878, 483], [898, 463], [918, 497], [937, 437]];
const maNavy: Pt[] = [[899, 611], [919, 598], [958, 576], [978, 570], [1006, 564], [1037, 556], [1069, 549], [1098, 543], [1140, 537], [1159, 534], [1180, 529], [1220, 527], [1260, 524], [1278, 521], [1300, 520], [1320, 518]];

const dailyLegend: [number, string, string][] = [
  [711, "218,376,77", "#000"], [792, "266,000,00", "#72729c"], [873, "266,750,00", "#9acd1e"], [953, "232,050,00", "#a9c8ee"], [1047, "261,910,13", "#0a7a0a"], [1129, "263,085,38", "#e0101c"],
  [1209, "265,796,67", "#e8bc4a"], [1290, "253,123,96", "#0a0ac8"], [1371, "233,641,42", "#3a6ae0"], [1464, "168,911,31", "#5f9a12"], [1556, "306,500,00", "#f2f21e"], [1638, "157,600,00", "#0a0ac8"],
];

function DailyChart() {
  const prices = Array.from({ length: 15 }, (_, i) => 310 - i * 5);
  const py = (p: number) => Math.round(158.7 + (310 - p) * 6.32);
  return (
    <svg viewBox="641 105 1279 538" className="block w-full" role="img" aria-label="SK하이닉스 일봉">
      <rect x="641" y="105" width="1279" height="538" fill="#fff" />
      <rect x="646" y="106" width="1182" height="537" fill="#c0c0c0" />
      <rect x="1828" y="106" width="87" height="537" fill="#d6e2f0" />
      {prices.map((p) => <H key={p} y={py(p)} x1={646} x2={1826} />)}
      <H y={128} x1={646} x2={1826} />
      <path d="M727.500 106V643M1189.500 106V643" stroke="#d6d6d6" strokeWidth="1.500" />
      <rect x="968" y="106" width="20" height="537" fill="#fccaf8" />
      <polygon points={str(cloud) + " 1702,612 969,612"} fill="#99cc00" />
      {daily.map(([k, t, b, h, l], i) => {
        const x = Math.round(657 + 20.1 * i);
        const c = k ? RED : BLUE;
        return <g key={i} fill={c}><rect x={x - 1} y={h} width="2" height={l - h} /><rect x={x - 8} y={t} width="17" height={b - t} /></g>;
      })}
      <Line p={lag} c="#66669a" w={2} />
      <Line p={maGreen} c="#0a7a0a" w={3} />
      <Line p={maRed} c="#ec0e0e" w={3} />
      <Line p={cloud.slice(7, 15)} c="#99cc00" w={3} />
      <Line p={maGold} c="#ffcc14" w={5} />
      <Line p={maNavy} c="#0000b4" w={3} />
      <Line p={[[657, 277], [677, 231], [878, 231], [899, 182], [1321, 182]]} c="#ffff33" w={3} />
      <Line p={maBlue} c="#3366ff" w={9} />
      <H y={437} x1={646} x2={1826} c="#c8143c" />
      <H y={613} x1={646} x2={1915} c="#999" />
      <rect x="969" y="632" width="18" height="11" fill="#3366ff" />
      <TableIcon x={654} y={133} />
      <T x={711} y={186} c="#d81420" s={16}>최고 306,500 (07/11)</T>
      <path d="M869 187H882M882 181L889 187L882 193Z" stroke={RED} strokeWidth="2" fill={RED} />
      <T x={1093} y={534} c="#14147a" s={16}>최저 250,000 (08/07)</T>
      <path d="M1251 535H1263M1263 529L1270 535L1263 541Z" stroke="#0000c8" strokeWidth="2" fill="#0000c8" />
      {dailyLegend.map(([x, t, c]) => <T key={x} x={x} y={118} c={c}>{t}</T>)}
      <Box x={1037} y={118} /><Box x={1454} y={118} /><Box x={1546} y={118} /><Box x={1719} y={118} />
      <rect x="1729" y="110" width="93" height="16" fill="#cbcbcb" />
      <T x={1734} y={117} c="#333" s={17}>SK하이닉스</T>
      <Box x={1735} y={134} /><T x={1820} y={134} c="#3a6ae0" end>272,987,11</T>
      <T x={1760} y={425} c="#d0143c" s={17}>당일종가</T>
      <Box x={1678} y={626} /><T x={1688} y={626} c="#e0101c">4,604,21</T><T x={1820} y={626} end>10,499,06</T>
      <path d="M1828.500 106V643M1915.500 106V643M646.500 643V106.500H1915" fill="none" stroke="#8c8c8c" strokeWidth="1.500" />
      <T x={1829} y={116} c="#e0101c" s={16}>LC:6,40</T>
      <T x={1829} y={133} c="#1d55b8" s={16}>HC:-13,21</T>
      {prices.map((p) => (
        <g key={p}>
          <path d={`M1828 ${py(p)}H1837M1828 ${py(p) - 16}H1832`} stroke="#888" strokeWidth="1.500" />
          {p !== 265 && <T x={1839} y={py(p) - 1} c="#444">{p},000</T>}
        </g>
      ))}
      <rect x="1834" y="427" width="78" height="17" fill={RED} />
      <T x={1839} y={435} c="#fff">266,000</T>
      <T x={1839} y={451} c="#d81420">3,70%</T>
      <T x={1839} y={645} c="#444">20,000</T>
      <CloseBox y={623} />
    </svg>
  );
}

const mGreen: Pt[] = [[643, 955], [681, 961], [713, 964], [717, 971], [722, 981], [728, 950], [736, 929], [754, 922], [783, 920], [830, 916], [852, 914], [897, 911], [954, 910], [962, 907], [1028, 903], [1042, 898], [1089, 895], [1105, 892], [1150, 886], [1211, 882], [1280, 879], [1309, 876], [1358, 873], [1443, 870], [1541, 868], [1635, 867], [1672, 865], [1682, 863], [1709, 862]];
const mBlue: Pt[] = [[643, 1115], [664, 1119], [693, 1121], [717, 1121], [724, 1113], [738, 1089], [758, 1063], [783, 1039], [807, 1014], [836, 991], [868, 967], [901, 949], [954, 933], [979, 922], [1028, 903], [1052, 891], [1073, 881], [1122, 861], [1171, 849], [1211, 840], [1244, 833], [1280, 829], [1304, 828], [1329, 823], [1362, 820], [1402, 819], [1455, 821], [1484, 822], [1541, 818], [1606, 816], [1647, 813], [1676, 812], [1709, 807]];
const mBlack: Pt[] = [[644, 1080], [681, 1087], [705, 1091], [720, 1092], [738, 1078], [758, 1065], [783, 1051], [828, 1029], [860, 1011], [901, 992], [958, 973], [987, 962], [1028, 948], [1101, 917], [1130, 907], [1183, 891], [1211, 884], [1252, 872], [1280, 867], [1309, 861], [1358, 853], [1402, 846], [1460, 842], [1541, 835], [1647, 826], [1709, 820]];
const mYellow: Pt[] = [[718, 784], [720, 965], [724, 965], [730, 857], [1032, 857], [1036, 820], [1088, 820], [1091, 802], [1672, 802], [1674, 783], [1706, 783], [1709, 768]];

// x start, x end, high, low
const ranges: [number, number, number, number][] = [
  [684, 716, 1113, 1132], [733, 741, 876, 894], [742, 747, 894, 930], [748, 754, 912, 967], [755, 767, 894, 912], [768, 781, 912, 930], [782, 786, 894, 930], [787, 829, 894, 912],
  [830, 851, 876, 912], [852, 899, 876, 894], [900, 955, 894, 912], [962, 1033, 857, 876], [1038, 1089, 821, 839], [1091, 1126, 802, 821],
  [1127, 1159, 821, 839], [1160, 1254, 802, 821], [1255, 1291, 821, 839], [1292, 1413, 802, 821], [1414, 1458, 821, 839], [1459, 1671, 802, 821], [1677, 1710, 784, 797],
];

function minuteBars() {
  let seed = 7;
  const rnd = () => { seed = (seed * 16807) % 2147483647; return seed / 2147483647; };
  const out: { x: number; h: number; l: number; t: number; b: number; c: string }[] = [];
  let up = true;
  for (const [x0, x1, hi, lo] of ranges) {
    for (let x = x0; x <= x1; x += 4) {
      if (rnd() > 0.55) up = !up;
      const r = rnd();
      const mid = Math.round((hi + lo) / 2);
      const wickUp = rnd() > 0.9 && hi > 830 ? 18 : 0;
      const wickDn = rnd() > 0.92 && lo < 935 && lo > 830 ? 18 : 0;
      const [t, b] = r < 0.26 ? [hi, lo] : r < 0.4 ? [mid, lo] : r < 0.5 ? [hi, mid] : r < 0.78 ? [lo - 1, lo] : [hi, hi + 1];
      out.push({ x, h: hi - wickUp, l: lo + wickDn, t, b, c: up ? RED : BLUE });
    }
  }
  return out;
}

const bigVol: [number, number, 0 | 1][] = [
  [667, 1293, 0], [681, 1291, 1], [716, 1207, 0], [720, 1263, 1], [724, 1256, 1], [728, 1251, 1], [733, 1284, 0], [737, 1286, 0], [741, 1286, 0], [745, 1289, 0], [750, 1287, 1], [754, 1287, 1], [758, 1298, 0], [766, 1297, 0], [770, 1294, 0],
  [784, 1279, 1], [788, 1294, 1], [793, 1292, 1], [831, 1287, 1], [853, 1290, 1], [883, 1294, 0], [899, 1294, 0], [958, 1266, 1], [964, 1290, 1], [981, 1288, 1], [1036, 1258, 1], [1040, 1291, 1],
  [1091, 1266, 1], [1103, 1290, 1], [1122, 1290, 0], [1266, 1296, 0], [1291, 1286, 1], [1304, 1296, 1], [1402, 1299, 0], [1453, 1297, 0], [1675, 1248, 1], [1709, 1288, 1],
];
const volMa: Pt[] = [[644, 1298], [713, 1298], [718, 1294], [732, 1286], [754, 1286], [762, 1287], [791, 1290], [820, 1294], [885, 1297], [946, 1301], [962, 1298], [1028, 1301], [1036, 1298], [1081, 1299], [1101, 1298], [1171, 1299], [1280, 1302], [1292, 1300], [1349, 1300], [1353, 1302], [1517, 1302], [1672, 1303], [1675, 1300], [1709, 1300]];

const macd: Pt[] = [[643, 1412], [664, 1411], [681, 1409], [717, 1407], [722, 1397], [728, 1360], [738, 1337], [748, 1335], [758, 1331], [764, 1333], [775, 1345], [787, 1348], [799, 1356], [815, 1366], [840, 1373], [860, 1378], [877, 1387], [897, 1392], [917, 1400], [936, 1407], [962, 1405], [971, 1398], [983, 1395], [1003, 1398], [1032, 1397], [1048, 1390], [1089, 1390], [1117, 1392], [1130, 1398], [1162, 1402], [1211, 1404], [1280, 1409], [1313, 1403], [1341, 1405], [1386, 1406], [1415, 1410], [1451, 1413], [1472, 1409], [1500, 1404], [1533, 1406], [1549, 1403], [1566, 1406], [1627, 1409], [1672, 1406], [1680, 1401], [1709, 1399]];
const signal: Pt[] = [[644, 1415], [681, 1411], [720, 1407], [730, 1392], [742, 1365], [756, 1347], [762, 1344], [775, 1343], [793, 1346], [811, 1355], [844, 1369], [877, 1380], [917, 1393], [930, 1400], [954, 1404], [975, 1402], [987, 1398], [1032, 1398], [1048, 1394], [1081, 1390], [1126, 1392], [1150, 1397], [1175, 1401], [1280, 1407], [1341, 1405], [1386, 1407], [1420, 1411], [1455, 1413], [1500, 1408], [1560, 1406], [1670, 1407], [1709, 1401]];

// Height of each histogram column above (+) or below (-) the zero line, from x = 720 in steps of 5
const histogram = [24, 34, 37, 37, 32, 24, 20, 18, 13, 9, 5, -1, -4, -4, -3, -4, -6, -8, -9, -9, -10, -8, -10, -10, -9, -9, -9, -8, -9, -7, -7, -8, -8, -7, -7, -7, -8, -7, -6, -8, -9, -8, -8, -7, -7, -5, -4, -3, 2, 4, 5, 5, 4, 2, 0, -1, -2, -1, 0, 1, 1, 0, 2, 3, 4, 3, 4, 3, 2, 1, 1, 1, 0, 0, -1, -2, -1, -3, -4, -5, -5, -5, -5, -5, -5, -4, -4, -3, -3, -3, -3, -3, -2, -3, -3, -3, -2, -2, -1, -1, -2, -2, -3, -3, -3, -2, -2, -3, -3, -3, -2, -2, -2, -1];

// Indicator samples are stored on a fine lattice and mapped onto the pane.
const left = (p: Pt[]): Pt[] => p.map(([x, y]) => [Math.round(640 + x / 2.45), Math.round(1170 + y / 3)]);
const right = (p: Pt[]): Pt[] => p.map(([x, y]) => [Math.round(1280 + x / 2.45), Math.round(820 + y / 1.9216)]);

const rsi: Pt[] = [
  ...left([[10, 940], [20, 950], [30, 930], [60, 928], [75, 948], [100, 930], [140, 925], [160, 930], [188, 928], [192, 860], [205, 835], [218, 832], [240, 845], [262, 880], [280, 875], [310, 890], [340, 890], [355, 880], [375, 880], [390, 893], [410, 893], [420, 903], [440, 897], [470, 895], [480, 887], [490, 903], [520, 895], [540, 890], [560, 913], [600, 912], [622, 900], [640, 925], [655, 943], [672, 925], [688, 945], [703, 923], [718, 945], [735, 930], [765, 930], [780, 910], [810, 893], [828, 905], [845, 920], [885, 918], [900, 903], [915, 903], [927, 932], [945, 905], [965, 903], [975, 892], [1010, 897], [1035, 915], [1060, 900], [1100, 898], [1120, 910], [1135, 890], [1155, 900], [1175, 918], [1190, 920], [1200, 938], [1215, 923], [1280, 922], [1293, 900], [1305, 928], [1330, 930], [1350, 905], [1370, 930], [1400, 930], [1425, 910], [1440, 937], [1470, 930], [1490, 925], [1520, 938], [1560, 940]]),
  ...right([[10, 1285], [25, 1270], [50, 1252], [80, 1252], [98, 1278], [108, 1262], [122, 1277], [135, 1262], [148, 1275], [165, 1268], [180, 1278], [200, 1263], [215, 1273], [240, 1268], [258, 1263], [270, 1275], [320, 1272], [340, 1283], [352, 1270], [385, 1288], [400, 1270], [425, 1283], [437, 1265], [470, 1270], [490, 1268], [520, 1257], [540, 1270], [560, 1265], [580, 1272], [610, 1272], [625, 1258], [655, 1257], [680, 1275], [700, 1277], [725, 1257], [745, 1267], [775, 1267], [795, 1260], [810, 1272], [818, 1262], [830, 1280], [850, 1280], [862, 1265], [880, 1268], [900, 1262], [915, 1270], [940, 1262], [960, 1258], [967, 1247], [980, 1255], [995, 1248], [1010, 1257], [1025, 1253], [1040, 1260], [1052, 1256]]),
];
const obv: Pt[] = [
  ...left([[10, 1292], [40, 1288], [70, 1298], [90, 1288], [190, 1285], [200, 1262], [218, 1195], [240, 1210], [262, 1230], [278, 1208], [300, 1210], [315, 1217], [340, 1215], [355, 1196], [460, 1196], [530, 1187], [600, 1187], [622, 1180], [640, 1188], [770, 1188], [785, 1164], [825, 1162], [840, 1155], [960, 1158], [972, 1125], [990, 1118], [1095, 1118], [1105, 1098], [1130, 1095], [1140, 1090], [1568, 1092]]),
  ...right([[60, 1367], [160, 1371], [200, 1375], [420, 1382], [690, 1384], [960, 1384], [970, 1363], [1052, 1360]]),
];
const obvSig: Pt[] = [
  ...left([[10, 1292], [100, 1290], [195, 1286], [220, 1255], [250, 1235], [300, 1220], [350, 1215], [400, 1202], [520, 1196], [640, 1188], [775, 1188], [830, 1172], [880, 1165], [960, 1158], [1000, 1138], [1050, 1128], [1100, 1122], [1150, 1103], [1220, 1094], [1568, 1092]]),
  ...right([[200, 1376], [420, 1382], [690, 1384], [960, 1384], [1000, 1372], [1052, 1365]]),
];

const minuteLegend: [number, string, string][] = [
  [1000, "266,500,00", "#f2f21e"], [1093, "269,833,33", "#e0101c"], [1174, "263,166,67", "#e8bc4a"], [1255, "259,333,33", "#333"], [1336, "252,666,67", "#3a6ae0"], [1417, "265,405,70", "#0a0ac8"], [1499, "265,039,51", "#000"], [1591, "0,00", "#3a6ae0"], [1637, "263,911,16", "#339966"],
];
const bands: [number, number][] = [[680, 5], [722, 10], [748, 5], [782, 4], [829, 5], [851, 4], [957, 5], [1034, 8], [1089, 5], [1102, 5], [1672, 5], [1707, 4]];
const times: [number, string][] = [[848, "09:30"], [975, "10:00"], [1102, "10:30"], [1231, "11:00"], [1358, "11:30"], [1487, "12:00"], [1614, "12:30"]];

function MinuteChart() {
  const bars = minuteBars();
  const prices = Array.from({ length: 10 }, (_, i) => 265 - i);
  const py = (p: number) => Math.round(820.8 + (265 - p) * 36.6);
  const small: [number, number, string][] = [];
  let s = 11;
  for (let x = 643; x < 1712; x += 4) {
    s = (s * 16807) % 2147483647;
    const r = s / 2147483647;
    const cap = x < 1150 ? 6 : 4;
    small.push([x, 1 + Math.round(r * cap), (s >> 4) % 5 < 3 ? RED : BLUE]);
  }
  return (
    <svg viewBox="641 719 1279 917" className="block w-full" role="img" aria-label="SK하이닉스 1분봉">
      <rect x="641" y="719" width="1279" height="917" fill="#fff" />
      <rect x="642" y="719" width="1186" height="892" fill="#c0c0c0" />
      <rect x="1828" y="719" width="87" height="892" fill="#d6e2f0" />
      <rect x="642" y="1611" width="1273" height="23" fill="#d6e2f0" />
      {[748, ...prices.map(py), 1201, 1254, 1363, 1541].map((y) => <H key={y} y={y} x1={642} x2={1826} />)}
      <path d={times.map(([x]) => `M${x}.500 719V1611`).join("") + "M717.500 719V1611"} stroke="#d6d6d6" strokeWidth="1.500" />
      {bands.map(([x, w]) => <rect key={x} x={x} y="719" width={w} height="892" fill="#fccaf8" />)}
      <path d="M719.500 719V1611" stroke="#d04040" strokeWidth="1.500" />
      <Line p={mGreen} c="#339966" w={8} />
      <Line p={mBlue} c="#0000d8" w={3} />
      <Line p={mBlack} c="#000" w={3} />
      <rect x="643" y="1132" width="8" height="18" fill={BLUE} /><rect x="651" y="1132" width="12" height="18" fill={RED} />
      <path d="M666 1132V1150M670 1132V1150M674 1132V1141M678 1132V1150M681 1132V1141M664 1132H698" stroke={RED} strokeWidth="2" />
      {bars.map((b, i) => (
        <g key={i} fill={b.c}><rect x={b.x + 1} y={b.h} width="1" height={b.l - b.h} /><rect x={b.x - 1} y={b.t} width="5" height={b.b - b.t} /></g>
      ))}
      <rect x="722" y="912" width="5" height="54" fill={RED} /><rect x="727" y="876" width="4" height="36" fill={RED} /><path d="M729 857V876M784 876V894M789 876V894M794 876V894M958 857V876" stroke={RED} strokeWidth="1.500" /><path d="M738 857V894" stroke={BLUE} strokeWidth="1.500" />
      <rect x="956" y="876" width="5" height="18" fill={RED} /><rect x="1034" y="839" width="4" height="18" fill={RED} /><rect x="1672" y="784" width="4" height="18" fill={RED} />
      <Line p={[[643, 782], [716, 782]]} c="#ffc814" w={2} />
      <Line p={[[717, 754], [717, 798]]} c="#ffc814" w={5} />
      <Line p={[[721, 888], [1709, 888]]} c="#fccc20" w={5} />
      <Line p={mYellow} c="#ffff33" w={2} />
      <path d="M719 784V965" stroke="#ffff33" strokeWidth="5" />
      <Line p={[[717, 960], [720, 1027], [1709, 1027]]} c="#333" w={5} />
      <rect x="715" y="1136" width="5" height="46" fill="#3366ff" />
      <H y={784} x1={642} x2={1826} c="#c8143c" />
      <H y={1113} x1={642} x2={1826} c="#000" />

      {small.map(([x, h, c]) => <rect key={x} x={x} y={1306 - h} width="4" height={h} fill={c} />)}
      {bigVol.map(([x, y, k]) => <rect key={x} x={x - 2} y={y} width="4" height={1306 - y} fill={k ? RED : BLUE} />)}
      <Line p={volMa} c="#000" w={3} />

      {histogram.map((v, i) => <rect key={i} x={720 + i * 5} y={v > 0 ? 1408 - v : 1408} width="5" height={Math.abs(v)} fill={v > 0 ? "#ff0000" : "#3366ff"} />)}
      <polygon points="1362,1408 1420,1410 1455,1410 1470,1408" fill="#3366ff" />
      <H y={1408} x1={1710} x2={1826} c="#000" />
      <path d="M643 1407H718M960 1408H1100M1290 1408H1710" stroke="red" strokeWidth="2" strokeDasharray="14 3" />
      <Line p={macd} c="#f01010" w={3} />
      <Line p={signal} c="#000" w={1} />

      <polygon points="718,1464 719,1456 723,1448 729,1447 738,1451 746,1463 746,1464" fill="red" />
      <H y={1464} x1={642} x2={1826} c="#000" /><H y={1482} x1={642} x2={1826} c="#000" /><H y={1499} x1={642} x2={1826} c="#000" />
      <Line p={rsi} c="#f01010" w={2} />
      <Line p={obv} c="#f01010" w={3} />
      <Line p={obvSig} c="#000" w={1} />

      {[1184, 1308, 1427, 1504, 1611].map((y) => <H key={y} y={y} x1={642} x2={1915} c="#8c8c8c" />)}
      <TableIcon x={650} y={746} />
      <T x={1533} y={771} c="#d81420" s={16}>최고 266,500 (12:52)</T>
      <path d="M1688 772H1701M1701 766L1708 772L1701 778Z" stroke={RED} strokeWidth="2" fill={RED} />
      <T x={671} y={1145} c="#0a0ab4" s={16}>최저 256,000 (15:04)</T>
      <path d="M668 1147H656M658 1140L650 1147L658 1154Z" stroke="#0000e0" strokeWidth="2" fill="#0000e0" />
      {minuteLegend.map(([x, t, c]) => <T key={x} x={x} y={731} c={c}>{t}</T>)}
      <Box x={991} y={731} /><Box x={1083} y={731} /><Box x={1582} y={731} /><Box x={1628} y={731} /><Box x={1719} y={731} />
      <rect x="1729" y="723" width="93" height="17" fill="#cbcbcb" />
      <T x={1734} y={731} c="#333" s={17}>SK하이닉스</T>
      <T x={1760} y={773} c="#111" s={17}>전일종가</T>
      <T x={1760} y={773} c="#d0143c" s={17}>당일종가</T>
      <T x={1760} y={1102} s={17}>전일종가</T>
      <Box x={1730} y={1195} /><T x={1739} y={1195} c="#e0101c">62,01</T><T x={1821} y={1195} end>19,09</T>
      <Box x={1671} y={1319} /><T x={1680} y={1319}>28,08</T><T x={1724} y={1319} c="#e0101c">180,99</T><T x={1821} y={1319} end>152,90</T>
      <Box x={1773} y={1439} /><T x={1821} y={1439} c="#e0101c" end>58,89</T>
      <Box x={1655} y={1516} /><T x={1664} y={1516} c="#e0101c">597,051,00</T><T x={1821} y={1516} end>570,763,35</T>
      <path d="M1828.500 719V1634M1915.500 719V1634M642 719.500H1915M642 1634.500H1915M642.500 719V1634" fill="none" stroke="#8c8c8c" strokeWidth="1.500" />
      <T x={1829} y={729} c="#e0101c" s={16}>LC:3,91</T>
      <T x={1829} y={746} c="#1d55b8" s={16}>HC:-0,19</T>
      {Array.from({ length: 56 }, (_, i) => Math.round(757 + i * 7.32)).map((y) => <path key={y} d={`M1828 ${y}H1832`} stroke="#888" />)}
      {[1211, 1222, 1232, 1243, 1264, 1275, 1285, 1296, 1331, 1340, 1349, 1372, 1381, 1390, 1399, 1449, 1457, 1474, 1514, 1527].map((y) => <path key={y} d={`M1828 ${y}H1832`} stroke="#888" />)}
      {prices.map((p) => <g key={p}><path d={`M1828 ${py(p)}H1837`} stroke="#888" strokeWidth="1.500" /><T x={1839} y={py(p) - 1} c="#444">{p},000</T></g>)}
      {([[1201, "400,00"], [1254, "200,00"], [1363, "1,000"], [1408, "0,00"], [1481, "50,00"], [1541, "500,000"]] as [number, string][]).map(([y, t]) => <g key={y}><path d={`M1828 ${y}H1837`} stroke="#888" strokeWidth="1.500" /><T x={1839} y={y - 1} c="#444">{t}</T></g>)}
      <rect x="1834" y="775" width="78" height="17" fill={RED} />
      <T x={1839} y={783} c="#fff">266,000</T>
      <T x={1839} y={799} c="#d81420">3,70%</T>
      {[1193, 1318, 1437, 1514].map((y) => <CloseBox key={y} y={y} />)}
      <path d={times.map(([x]) => `M${x}.500 1611V1634`).join("") + "M715.500 1611V1634M719.500 1611V1634"} stroke="#888" strokeWidth="1.300" />
      <T x={645} y={1622} c="#333" s={16} bold>08/08</T>
      <T x={721} y={1622} c="#333" s={16} bold>08/11</T>
      {times.map(([x, t]) => <T key={x} x={x + 2} y={1622} c="#444" s={15}>{t}</T>)}
      <T x={1839} y={1622} c="#444" s={15}>12:52:00</T>
    </svg>
  );
}

/* ---------- page ---------- */

function Research() {
  const h = "h-[54px] border-r border-[#4d6072] text-white";
  const d = "h-[80px] border-r border-[#dcdfe4] pb-2 align-bottom";
  return (
    <table className="w-full shrink-0 table-fixed border-collapse bg-[#f0f3f9] font-['Open_Sans','Noto_Sans_CJK_KR',sans-serif] text-[21px] leading-none">
      <colgroup><col className="w-[91px]" /><col className="w-[130px]" /><col className="w-[131px]" /><col /></colgroup>
      <thead>
        <tr className="bg-linear-to-b from-[#3d4f60] to-[#2b3d4f]">
          <th className={h + " font-medium"}><div className="flex justify-end pr-6 whitespace-nowrap">투자의견</div></th>
          <th className={h + " pr-2 font-medium"}>목표주가</th>
          <th className={h + " text-[19px] font-bold"}>EPS</th>
          <th className={h + " pr-[5px] text-right text-[19px] font-bold"}>PER</th>
        </tr>
      </thead>
      <tbody>
        <tr><td className={d + " pr-[50px] text-right"}>3.9</td><td className={d + " text-center"}>335,000</td><td className={d + " text-center"}>42,376</td><td className={d + " pr-[11px] text-right"}>6.1</td></tr>
      </tbody>
    </table>
  );
}

export default function App() {
  return (
    <div className="flex h-screen flex-col overflow-hidden bg-[#999b9e] font-['Noto_Sans_CJK_KR','Liberation_Sans',sans-serif] text-[17px] text-black">
      <div className="h-[5px] shrink-0 border-b border-[#777] bg-[#c9d6e8]" />
      <div className="flex min-h-0 flex-1">
        <div className="relative flex w-[443px] shrink-0 flex-col">
          <div className="flex h-[611px] shrink-0 gap-2 pt-[5px] pl-1">
            <div className="flex w-[208px] flex-col gap-[11px]">
              <ConditionWindow title="Pivot 2차 돌파" count={1} rows={[{ name: "신흥에스이씨", rate: "+9.65" }]} className="h-[287px]" />
              <ConditionWindow title="20일 지수이평" count={8} rows={rowsIndex} sorted third="가" className="h-[301px]" />
            </div>
            <div className="flex w-[220px] flex-col gap-[11px]">
              <ConditionWindow title="Pivot 1차 돌파" count={0} className="mr-[3px] h-[333px]" />
              <ConditionWindow title="분당 50억 이상" count={1} checked={false} third="거" rows={[{ name: "두산에너빌리", rate: "+5.12", extra: "|", dark: true, nameBg: "bg-[#bebebe]", rateBg: L, mark: "r" }]} className="ml-[3px] h-[254px]" />
            </div>
          </div>
          <Research />
          <OrderWindow />
          <MarkerRing />
        </div>
        <div className="ml-1 flex w-[185px] shrink-0 flex-col gap-[6px] pt-[5px]">
          <ConditionWindow title="6%이상 상승" count={6} rows={rowsSix} className="h-[277px]" />
          <ConditionWindow title="분당10억이상" count={1} rows={[{ name: "신흥에스이씨", rate: "+9.65" }]} className="h-[253px]" />
          <ConditionWindow title="OBV_체결강도" count={0} className="h-[312px]" />
          <ConditionWindow title="전고점 돌파" count={0} className="h-[252px]" />
          <FlowList />
          <div className="h-0" />
          <RankList />
        </div>
        <main className="ml-[9px] flex min-w-0 flex-1 flex-col">
          <header className="flex h-[31px] shrink-0 items-center bg-[#96999e] pr-1 pl-[2px] text-white">
            <span className="mr-[7px] flex h-5 w-[18px] items-center justify-center rounded-sm border-2 border-white bg-[#3f68b5] text-[15px] leading-none font-bold">1</span>
            <h1 className="flex-1 truncate text-[18px] leading-6">[6600] 통합키움차트 - KOSPI200 PBR[2.54] 유통비율[74.1] 영업이익률[35.5] 배당수익률[0.9] 시가총액[1,936,486(억)]</h1>
            <TitleButtons />
          </header>
          <ChartToolbar />
          <DailyChart />
          <div className="h-[7px] shrink-0 bg-[#3a5590]" />
          <ChartToolbar minute />
          <MinuteChart />
        </main>
      </div>
    </div>
  );
}
